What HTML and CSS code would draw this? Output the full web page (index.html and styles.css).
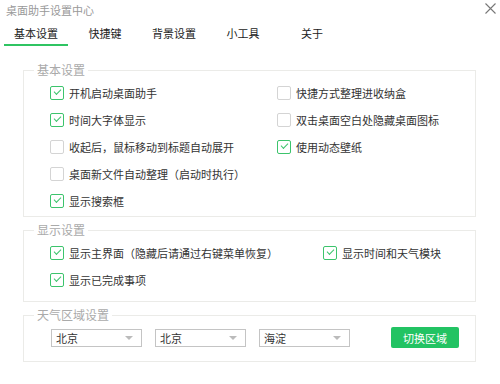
FILE: index.html
```html
<!DOCTYPE html>
<html>
<head>
    <meta charset="utf-8">
    <title>桌面助手设置中心</title>
    <link rel="stylesheet" href="styles.css">
</head>
<body>
    <div class="titlebar">
        <span class="title">桌面助手设置中心</span>
        <svg class="close" width="11" height="11" viewBox="0 0 11 11">
            <path d="M0.5 0.5 L10.5 10.5 M10.5 0.5 L0.5 10.5" stroke="#777" stroke-width="1.1" fill="none"/>
        </svg>
    </div>

    <div class="tabs">
        <div class="tab active">基本设置</div>
        <div class="tab">快捷键</div>
        <div class="tab">背景设置</div>
        <div class="tab">小工具</div>
        <div class="tab">关于</div>
    </div>

    <fieldset class="group first">
        <legend>基本设置</legend>
        <div class="rows basic">
            <label class="check on"><span class="box"></span>开机启动桌面助手</label>
            <label class="check"><span class="box"></span>快捷方式整理进收纳盒</label>
            <label class="check on"><span class="box"></span>时间大字体显示</label>
            <label class="check"><span class="box"></span>双击桌面空白处隐藏桌面图标</label>
            <label class="check"><span class="box"></span>收起后，鼠标移动到标题自动展开</label>
            <label class="check on"><span class="box"></span>使用动态壁纸</label>
            <label class="check"><span class="box"></span>桌面新文件自动整理（启动时执行）</label>
            <div></div>
            <label class="check on"><span class="box"></span>显示搜索框</label>
        </div>
    </fieldset>

    <fieldset class="group second">
        <legend>显示设置</legend>
        <div class="rows display">
            <label class="check on"><span class="box"></span>显示主界面（隐藏后请通过右键菜单恢复）</label>
            <label class="check on"><span class="box"></span>显示时间和天气模块</label>
            <label class="check on"><span class="box"></span>显示已完成事项</label>
        </div>
    </fieldset>

    <fieldset class="group third">
        <legend>天气区域设置</legend>
        <div class="weather">
            <div class="select">北京<span class="arrow"></span></div>
            <div class="select">北京<span class="arrow"></span></div>
            <div class="select">海淀<span class="arrow"></span></div>
            <button class="switch">切换区域</button>
        </div>
    </fieldset>
</body>
</html>
```

FILE: styles.css
```css
body {
    margin: 0;
    width: 500px;
    height: 384px;
    background-color: #fff;
    color: #333;
    font-family: "Noto Sans CJK SC", "Noto Sans", sans-serif;
    font-size: 11px;
    line-height: 14px;
}

.titlebar {
    display: flex;
    justify-content: space-between;
    align-items: center;
    height: 20px;
    padding: 0 4px 0 6px;
}

.title {
    color: #999;
}

.close {
    margin-top: -4px;
}

.tabs {
    display: flex;
    padding-left: 4px;
}

.tab {
    width: 64px;
    margin-right: 5px;
    text-align: center;
    padding: 6px 0 4px;
    border-bottom: 2px solid transparent;
    color: #222;
}

.tab.active {
    border-bottom-color: #2fc462;
}

.group {
    margin: 0 24px 0 23px;
    border: 1px solid #ebebe8;
    padding: 0 0 0 10px;
}

.group legend {
    padding: 0 3px;
    color: #aaa;
    font-size: 12px;
    line-height: 14px;
}

.first {
    margin-top: 17px;
    padding-top: 2px;
    padding-bottom: 2px;
}

.second {
    margin-top: 6px;
    padding-top: 2px;
    padding-bottom: 8px;
}

.third {
    margin-top: 6px;
    padding-top: 5px;
    padding-bottom: 13px;
}

.rows {
    display: grid;
    grid-auto-rows: 27px;
    padding-left: 16px;
}

.basic {
    grid-template-columns: 227px 1fr;
}

.display {
    grid-template-columns: 273px 1fr;
}

.check {
    display: flex;
    align-items: center;
    white-space: nowrap;
}

.box {
    position: relative;
    width: 12px;
    height: 12px;
    margin-right: 5px;
    border: 1px solid #d4d4d4;
    border-radius: 2px;
    background-color: #fff;
    flex-shrink: 0;
}

.check.on .box {
    border-color: #3cc46c;
}

.check.on .box::after {
    content: "";
    position: absolute;
    left: 3px;
    top: 2px;
    width: 6px;
    height: 3px;
    border-left: 1px solid #3cc46c;
    border-bottom: 1px solid #3cc46c;
    transform: rotate(-45deg);
}

.weather {
    display: flex;
    align-items: center;
    height: 21px;
    padding-left: 17px;
}

.select {
    display: flex;
    justify-content: space-between;
    align-items: center;
    box-sizing: border-box;
    width: 91px;
    height: 18px;
    margin-right: 13px;
    padding: 0 8px 0 4px;
    border: 1px solid #c4c4c4;
    color: #333;
}

.arrow {
    width: 0;
    height: 0;
    border-left: 4px solid transparent;
    border-right: 4px solid transparent;
    border-top: 4px solid #bbb;
}

.switch {
    width: 68px;
    height: 21px;
    margin-left: 28px;
    padding: 0;
    border: none;
    border-radius: 2px;
    background-color: #22c363;
    color: #fff;
    font-family: inherit;
    font-size: 11px;
}
```
